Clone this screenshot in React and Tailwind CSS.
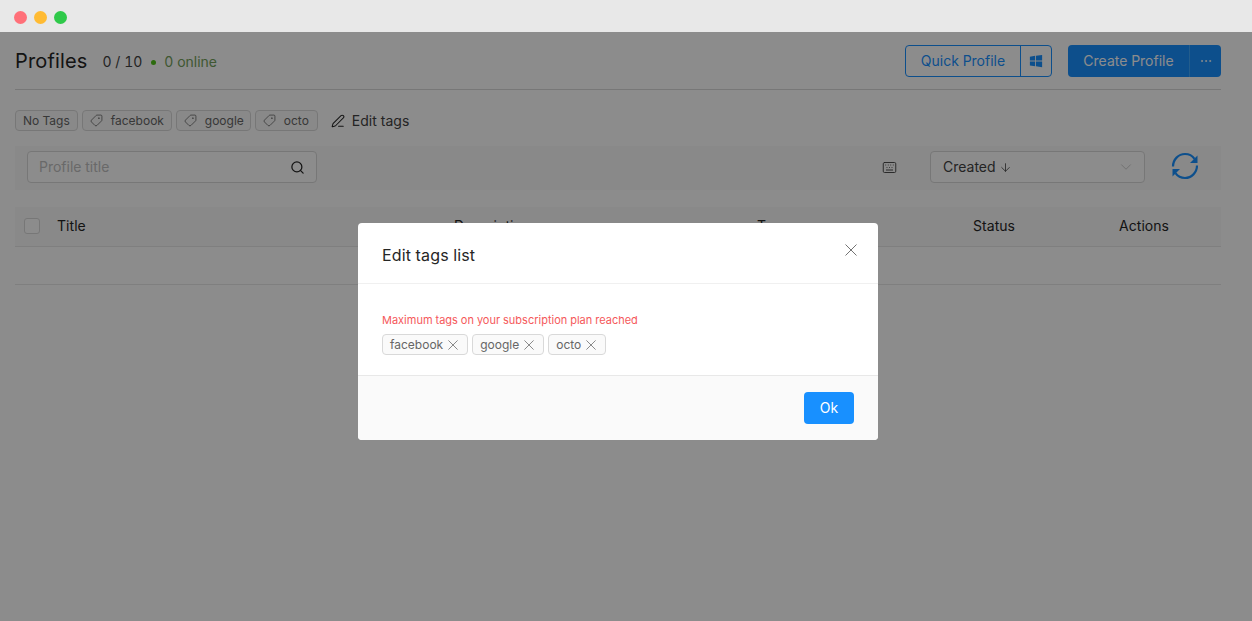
import React from "react";
import { Search, Keyboard, ChevronDown, ArrowDown, PenLine, Tag, Ellipsis } from "lucide-react";

const WindowsIcon = () => (
  <svg viewBox="0 0 16 16" className="w-[14px] h-[14px]" fill="#1890ff">
    <path d="M1 3l6-.9v5.4H1zM8 2l7-1v6.500H8zM1 8.500h6v5.400l-6-.9zM8 8.500h7V15l-7-1z" />
  </svg>
);

const SyncIcon = () => (
  <svg viewBox="0 0 28 28" className="w-[28px] h-[28px] ml-[26px] mt-[1px]" fill="none" stroke="#1890ff" strokeWidth="2.200">
    <path d="M2 14.500C2 7.500 7.500 2 14 2c4 0 7.400 1.800 9.500 4.800" />
    <path d="M26 13.500C26 20.500 20.500 26 14 26c-4 0-7.400-1.800-9.500-4.800" />
    <path d="M26.500 3.500v7.500h-7.500z" fill="#1890ff" stroke="none" />
    <path d="M1.500 24.500V17h7.500z" fill="#1890ff" stroke="none" />
  </svg>
);

const XMark = ({ size, className }) => (
  <svg viewBox="0 0 12 12" width={size} height={size} className={className} fill="none" stroke="currentColor" strokeWidth="1">
    <path d="M0.500 0.500l11 11M11.500 0.500l-11 11" />
  </svg>
);

const TagChip = ({ label, icon, width }) => (
  <div className={`h-[21px] flex items-center gap-2 px-[7px] border border-[#d9d9d9] rounded-[4px] bg-[#fafafa] text-xs text-[#666666] ${width}`}>
    {icon && <Tag size={13} strokeWidth={1.5} className="rotate-90 shrink-0" />}
    <span>{label}</span>
  </div>
);

const ModalTag = ({ label }) => (
  <div className="h-[21px] flex items-center gap-[5px] pl-[7px] pr-[9px] border border-[#d9d9d9] rounded-[4px] bg-[#fafafa] text-xs text-[#666666]">
    <span>{label}</span>
    <XMark size={10} className="text-[#737373]" />
  </div>
);

const App = () => {
  return (
    <div className="relative w-[1252px] h-[621px] overflow-hidden bg-white font-['Inter',sans-serif] tabular-nums">
      {/* window title bar */}
      <div className="h-8 bg-[#e8e8e8] flex items-center gap-[7px] pl-[14px] pt-[2px] relative z-20">
        <div className="w-[13px] h-[13px] rounded-full bg-[#ff7079]" />
        <div className="w-[13px] h-[13px] rounded-full bg-[#ffbb33]" />
        <div className="w-[13px] h-[13px] rounded-full bg-[#2fc94a]" />
      </div>

      <div className="px-[15px] pr-[31px]">
        <div className="h-[58px] flex items-center justify-between border-b border-[#d9d9d9]">
          <div className="flex items-center">
            <span className="text-[20px] tracking-[0.15px] text-[#262626] mt-[1px]">Profiles</span>
            <span className="ml-[15px] mt-[3px] text-sm text-[#434343]">0 / 10</span>
            <span className="ml-[9px] mt-[3px] w-[5px] h-[5px] rounded-full bg-[#52c41a]" />
            <span className="ml-[8px] mt-[3px] text-sm text-[#73a05b]">0 online</span>
          </div>
          <div className="flex items-center gap-4 mt-[1px]">
            <div className="flex h-8 border border-[#1890ff] rounded-[4px] text-[#1890ff] text-sm">
              <div className="w-[115px] flex items-center justify-center border-r border-[#1890ff]">Quick Profile</div>
              <div className="w-[30px] flex items-center justify-center">
                <WindowsIcon />
              </div>
            </div>
            <div className="flex h-8 rounded-[4px] bg-[#1890ff] text-white text-sm">
              <div className="w-[122px] flex items-center justify-center border-r border-[#40a9ff]">Create Profile</div>
              <div className="w-[31px] flex items-center justify-center">
                <Ellipsis size={14} strokeWidth={1.5} />
              </div>
            </div>
          </div>
        </div>

        <div className="mt-[20px] flex items-center gap-[4px]">
          <TagChip label="No Tags" />
          <TagChip label="facebook" icon width="w-[90px]" />
          <TagChip label="google" icon width="w-[75px]" />
          <TagChip label="octo" icon width="w-[63px]" />
          <div className="ml-[9px] mt-[1px] flex items-center gap-[7px] text-sm tracking-[0.05px] text-[#434343]">
            <PenLine size={14} strokeWidth={1.75} className="text-[#262626]" />
            <span>Edit tags</span>
          </div>
        </div>

        <div className="mt-[15px] h-[44px] bg-[#fafafa] flex items-start pt-[5px] pl-3">
          <div className="w-[290px] h-8 border border-[#d9d9d9] rounded-[4px] bg-white flex items-center justify-between pl-[11px] pr-[11px] text-sm text-[#bfbfbf]">
            <span>Profile title</span>
            <Search size={15} strokeWidth={2} className="text-[#262626]" />
          </div>
          <Keyboard size={15} strokeWidth={1.5} className="ml-[565px] mt-[9px] text-[#434343]" />
          <div className="ml-[33px] w-[215px] h-8 border border-[#d9d9d9] rounded-[4px] bg-white flex items-center justify-between pl-3 pr-[9px] text-sm text-[#434343]">
            <span className="flex items-center gap-[3px]">
              Created <ArrowDown size={13} strokeWidth={1.5} />
            </span>
            <ChevronDown size={18} strokeWidth={1} className="text-[#bfbfbf]" />
          </div>
          <SyncIcon />
        </div>

        <div className="mt-[17px] h-[40px] bg-[#fafafa] border-b border-[#e8e8e8] flex items-center text-sm tracking-[0.05px] text-[#262626] pb-[2px]">
          <div className="ml-[9px] w-4 h-4 border border-[#d9d9d9] rounded-[3px] bg-white" />
          <span className="ml-[17px] w-[397px]">Title</span>
          <span className="w-[303px]">Description</span>
          <span className="w-[216px]">Tags</span>
          <span className="w-[146px]">Status</span>
          <span>Actions</span>
        </div>
        <div className="h-[38px] border-b border-[#e8e8e8]" />
      </div>

      {/* modal mask */}
      <div className="absolute inset-0 top-8 bg-black/45 z-10" />

      {/* modal */}
      <div className="absolute left-[358px] top-[223px] w-[520px] h-[217px] bg-white rounded-[4px] z-20 flex flex-col overflow-hidden">
        <div className="h-[61px] border-b border-[#f0f0f0] flex items-center justify-between pl-6 pr-[21px]">
          <span className="text-base tracking-[0.15px] text-[#262626] mt-[3px]">Edit tags list</span>
          <XMark size={12} className="text-[#737373] mb-[6px]" />
        </div>
        <div className="h-[91px] pl-6 pt-[29px]">
          <div className="text-[11px] leading-[14px] text-[#f5595b]">Maximum tags on your subscription plan reached</div>
          <div className="mt-[7px] flex gap-[4px]">
            <ModalTag label="facebook" />
            <ModalTag label="google" />
            <ModalTag label="octo" />
          </div>
        </div>
        <div className="flex-1 border-t border-[#e8e8e8] bg-[#fafafa] flex items-center justify-end pr-6">
          <div className="w-[50px] h-8 rounded-[4px] bg-[#1890ff] text-white text-sm flex items-center justify-center">Ok</div>
        </div>
      </div>
    </div>
  );
};

export default App;
